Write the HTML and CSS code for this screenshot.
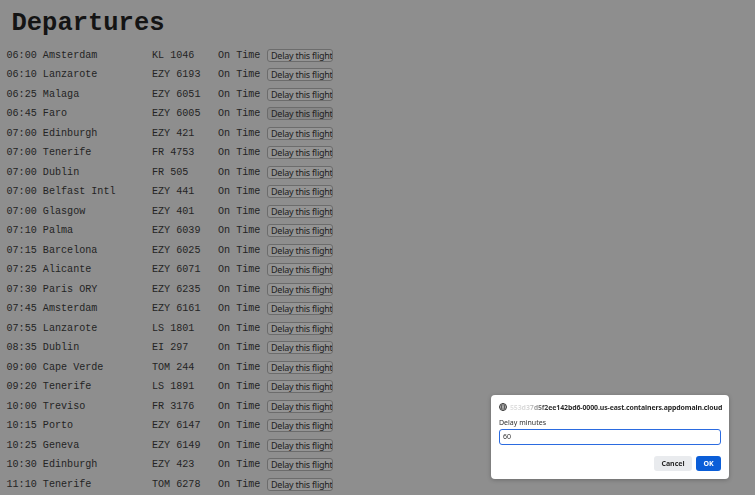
FILE: index.html
```html
<!DOCTYPE html>
<html>
<head>
<meta charset="utf-8">
<link rel="stylesheet" href="styles.css">
</head>
<body>
<h1 class="title">Departures</h1>
<div class="board">
  <div class="row"><span class="dest">06:00 Amsterdam</span><span class="flight">KL 1046</span><span class="status">On Time</span><button class="delay">Delay this flight</button></div>
  <div class="row"><span class="dest">06:10 Lanzarote</span><span class="flight">EZY 6193</span><span class="status">On Time</span><button class="delay">Delay this flight</button></div>
  <div class="row"><span class="dest">06:25 Malaga</span><span class="flight">EZY 6051</span><span class="status">On Time</span><button class="delay">Delay this flight</button></div>
  <div class="row"><span class="dest">06:45 Faro</span><span class="flight">EZY 6005</span><span class="status">On Time</span><button class="delay hover">Delay this flight</button></div>
  <div class="row"><span class="dest">07:00 Edinburgh</span><span class="flight">EZY 421</span><span class="status">On Time</span><button class="delay">Delay this flight</button></div>
  <div class="row"><span class="dest">07:00 Tenerife</span><span class="flight">FR 4753</span><span class="status">On Time</span><button class="delay">Delay this flight</button></div>
  <div class="row"><span class="dest">07:00 Dublin</span><span class="flight">FR 505</span><span class="status">On Time</span><button class="delay">Delay this flight</button></div>
  <div class="row"><span class="dest">07:00 Belfast Intl</span><span class="flight">EZY 441</span><span class="status">On Time</span><button class="delay">Delay this flight</button></div>
  <div class="row"><span class="dest">07:00 Glasgow</span><span class="flight">EZY 401</span><span class="status">On Time</span><button class="delay">Delay this flight</button></div>
  <div class="row"><span class="dest">07:10 Palma</span><span class="flight">EZY 6039</span><span class="status">On Time</span><button class="delay">Delay this flight</button></div>
  <div class="row"><span class="dest">07:15 Barcelona</span><span class="flight">EZY 6025</span><span class="status">On Time</span><button class="delay">Delay this flight</button></div>
  <div class="row"><span class="dest">07:25 Alicante</span><span class="flight">EZY 6071</span><span class="status">On Time</span><button class="delay">Delay this flight</button></div>
  <div class="row"><span class="dest">07:30 Paris ORY</span><span class="flight">EZY 6235</span><span class="status">On Time</span><button class="delay">Delay this flight</button></div>
  <div class="row"><span class="dest">07:45 Amsterdam</span><span class="flight">EZY 6161</span><span class="status">On Time</span><button class="delay">Delay this flight</button></div>
  <div class="row"><span class="dest">07:55 Lanzarote</span><span class="flight">LS 1801</span><span class="status">On Time</span><button class="delay">Delay this flight</button></div>
  <div class="row"><span class="dest">08:35 Dublin</span><span class="flight">EI 297</span><span class="status">On Time</span><button class="delay">Delay this flight</button></div>
  <div class="row"><span class="dest">09:00 Cape Verde</span><span class="flight">TOM 244</span><span class="status">On Time</span><button class="delay">Delay this flight</button></div>
  <div class="row"><span class="dest">09:20 Tenerife</span><span class="flight">LS 1891</span><span class="status">On Time</span><button class="delay">Delay this flight</button></div>
  <div class="row"><span class="dest">10:00 Treviso</span><span class="flight">FR 3176</span><span class="status">On Time</span><button class="delay">Delay this flight</button></div>
  <div class="row"><span class="dest">10:15 Porto</span><span class="flight">EZY 6147</span><span class="status">On Time</span><button class="delay">Delay this flight</button></div>
  <div class="row"><span class="dest">10:25 Geneva</span><span class="flight">EZY 6149</span><span class="status">On Time</span><button class="delay">Delay this flight</button></div>
  <div class="row"><span class="dest">10:30 Edinburgh</span><span class="flight">EZY 423</span><span class="status">On Time</span><button class="delay">Delay this flight</button></div>
  <div class="row"><span class="dest">11:10 Tenerife</span><span class="flight">TOM 6278</span><span class="status">On Time</span><button class="delay">Delay this flight</button></div>
</div>

<div class="dialog">
  <div class="origin">
    <svg class="globe" viewBox="0 0 16 16" width="8" height="8">
      <circle cx="8" cy="8" r="7" fill="none" stroke="#3c3c3c" stroke-width="2"/>
      <ellipse cx="8" cy="8" rx="3" ry="7" fill="none" stroke="#3c3c3c" stroke-width="1.6"/>
      <line x1="1" y1="8" x2="15" y2="8" stroke="#3c3c3c" stroke-width="1.6"/>
      <line x1="2" y1="4.5" x2="14" y2="4.5" stroke="#3c3c3c" stroke-width="1.2"/>
      <line x1="2" y1="11.5" x2="14" y2="11.5" stroke="#3c3c3c" stroke-width="1.2"/>
    </svg>
    <span class="host">553d37d5f2ee142bd6-0000.us-east.containers.appdomain.cloud</span>
  </div>
  <div class="label">Delay minutes</div>
  <div class="input">60</div>
  <div class="actions">
    <button class="btn cancel">Cancel</button>
    <button class="btn ok">OK</button>
  </div>
</div>
</body>
</html>
```

FILE: styles.css
```css
html {
  overflow: hidden;
  background: #8e8e8e;
}
body {
  margin: 0;
  padding: 0 6.5px;
  background: #8e8e8e;
  color: #1f1f1f;
  font-family: "Liberation Mono", "DejaVu Sans Mono", monospace;
}
.title {
  margin: 8.5px 0 7px 5px;
  font-size: 25.5px;
  line-height: 30px;
  font-weight: bold;
  color: #141414;
}
.board {
  display: flex;
  flex-direction: column;
}
.row {
  display: flex;
  align-items: center;
  height: 19.5px;
  font-size: 10.1px;
  white-space: pre;
  color: #242424;
}
.dest {
  width: 145.5px;
}
.flight {
  width: 66px;
}
.status {
  width: 48px;
}
.delay {
  margin: 0 0 0 1px;
  padding: 0 3px;
  height: 13px;
  width: 66px;
  box-sizing: border-box;
  border: 1px solid #6c6c6c;
  border-radius: 3px;
  background: #949494;
  color: #1e1e1e;
  font-family: "Noto Sans", "Open Sans", sans-serif;
  font-size: 9px;
  letter-spacing: -0.25px;
  line-height: 11px;
  white-space: nowrap;
  overflow: hidden;
}
.delay.hover {
  background: #868686;
}

.dialog {
  position: fixed;
  left: 491px;
  top: 395px;
  width: 238px;
  height: 84px;
  box-sizing: border-box;
  padding: 6px 8px 8px;
  background: #ffffff;
  border-radius: 4px;
  box-shadow: 0 1px 4px rgba(0, 0, 0, 0.25);
  font-family: "Noto Sans", "Open Sans", sans-serif;
  display: flex;
  flex-direction: column;
}
.origin {
  display: flex;
  align-items: center;
  height: 12px;
  gap: 3px;
}
.globe {
  flex: none;
}
.host {
  font-size: 6.95px;
  font-weight: bold;
  letter-spacing: -0.1px;
  white-space: nowrap;
  background: linear-gradient(90deg, #e2e2e2 0, #d4d4d4 20px, #2a2a2a 38px, #1f1f1f 100%);
  -webkit-background-clip: text;
  background-clip: text;
  color: transparent;
}
.label {
  margin-top: 5px;
  height: 10px;
  line-height: 10px;
  font-size: 7px;
  color: #303030;
}
.input {
  margin-top: 1px;
  height: 16px;
  box-sizing: border-box;
  border: 1.5px solid #2b6be0;
  border-radius: 3px;
  padding: 0 0 0 3px;
  font-size: 7px;
  line-height: 13px;
  color: #303030;
}
.actions {
  margin-top: 11px;
  display: flex;
  justify-content: flex-end;
  gap: 4px;
}
.btn {
  height: 15px;
  border: none;
  border-radius: 3px;
  padding: 0;
  font-family: "Noto Sans", "Open Sans", sans-serif;
  font-size: 7px;
  font-weight: bold;
  line-height: 15px;
}
.cancel {
  width: 38px;
  background: #e9ebee;
  color: #2a2a2a;
}
.ok {
  width: 25px;
  background: #0b5ed8;
  color: #ffffff;
}
```
